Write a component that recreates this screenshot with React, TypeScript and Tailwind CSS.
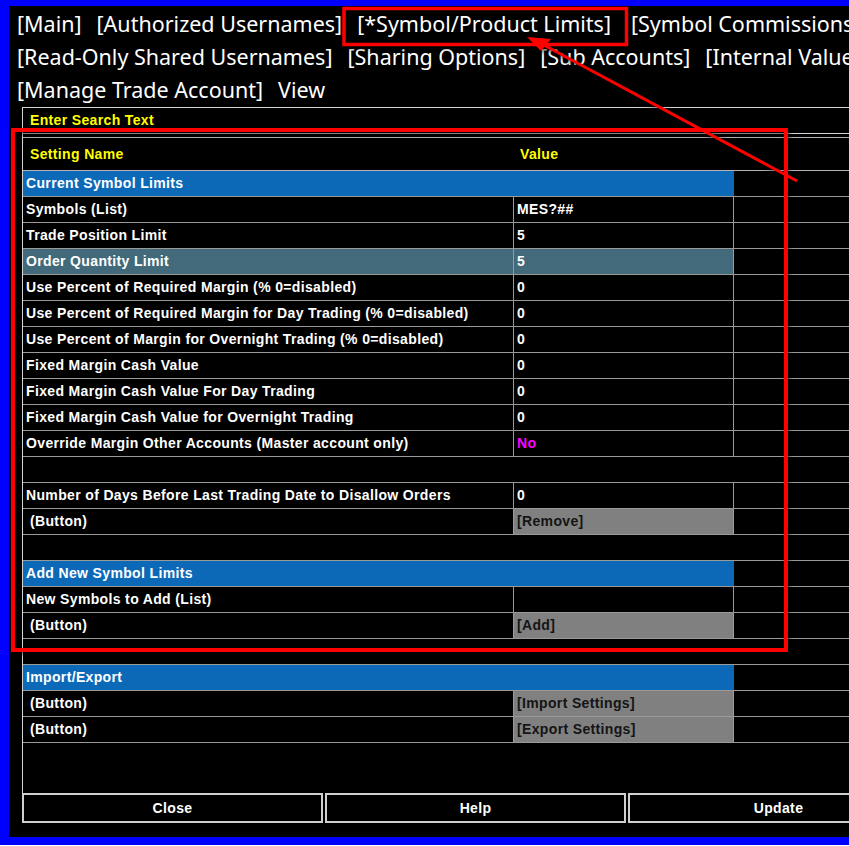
import React from "react";

type Row =
  | { kind: "section"; label: string }
  | { kind: "empty" }
  | { kind: "item"; label: string; value?: string; magenta?: boolean; highlight?: boolean; button?: boolean; indent?: boolean };

const rows: Row[] = [
  { kind: "section", label: "Current Symbol Limits" },
  { kind: "item", label: "Symbols (List)", value: "MES?##" },
  { kind: "item", label: "Trade Position Limit", value: "5" },
  { kind: "item", label: "Order Quantity Limit", value: "5", highlight: true },
  { kind: "item", label: "Use Percent of Required Margin (% 0=disabled)", value: "0" },
  { kind: "item", label: "Use Percent of Required Margin for Day Trading (% 0=disabled)", value: "0" },
  { kind: "item", label: "Use Percent of Margin for Overnight Trading (% 0=disabled)", value: "0" },
  { kind: "item", label: "Fixed Margin Cash Value", value: "0" },
  { kind: "item", label: "Fixed Margin Cash Value For Day Trading", value: "0" },
  { kind: "item", label: "Fixed Margin Cash Value for Overnight Trading", value: "0" },
  { kind: "item", label: "Override Margin Other Accounts (Master account only)", value: "No", magenta: true },
  { kind: "empty" },
  { kind: "item", label: "Number of Days Before Last Trading Date to Disallow Orders", value: "0" },
  { kind: "item", label: "(Button)", value: "[Remove]", button: true, indent: true },
  { kind: "empty" },
  { kind: "section", label: "Add New Symbol Limits" },
  { kind: "item", label: "New Symbols to Add (List)", value: "" },
  { kind: "item", label: "(Button)", value: "[Add]", button: true, indent: true },
  { kind: "empty" },
  { kind: "section", label: "Import/Export" },
  { kind: "item", label: "(Button)", value: "[Import Settings]", button: true, indent: true },
  { kind: "item", label: "(Button)", value: "[Export Settings]", button: true, indent: true },
];

function TableRow({ row }: { row: Row }) {
  if (row.kind === "empty") {
    return <div className="h-[26px] border-b border-[#9a9a9a]" />;
  }
  if (row.kind === "section") {
    return (
      <div className="h-[26px] border-b border-[#9a9a9a] flex">
        <div className="w-[711px] bg-[#0c69b8] pl-[3px] flex items-center text-white">{row.label}</div>
        <div className="flex-1" />
      </div>
    );
  }
  let valueCls = "text-white";
  if (row.button) valueCls = "bg-[#808080] text-[#141414]";
  else if (row.highlight) valueCls = "bg-[#426a7a] text-white";
  else if (row.magenta) valueCls = "text-[#ff00ff]";
  return (
    <div className="h-[26px] border-b border-[#9a9a9a] flex">
      <div
        className={`w-[491px] border-r border-[#9a9a9a] flex items-center text-white whitespace-nowrap overflow-hidden ${
          row.indent ? "pl-[7px]" : "pl-[3px]"
        } ${row.highlight ? "bg-[#426a7a]" : ""}`}
      >
        {row.label}
      </div>
      <div className={`w-[220px] border-r border-[#9a9a9a] flex items-center pl-[3px] whitespace-nowrap ${valueCls}`}>
        {row.value}
      </div>
      <div className="flex-1" />
    </div>
  );
}

export default function App() {
  return (
    <div className="relative w-[849px] h-[846px] overflow-hidden bg-white">
      <div className="w-[960px] h-[845px] bg-black border-l-[9px] border-t-[6px] border-b-[8px] border-r-0 border-[#0000ff] flex flex-col">
        <div
          className="pl-[8px] pt-[1px] text-white text-[21.5px] leading-[33px] whitespace-nowrap"
          style={{ fontFamily: '"Noto Sans", "Open Sans", sans-serif' }}
        >
          <div className="flex gap-[15px]">
            <span>[Main]</span>
            <span>[Authorized Usernames]</span>
            <span>[*Symbol/Product Limits]</span>
            <span className="ml-[5px]">[Symbol Commissions]</span>
          </div>
          <div className="flex gap-[15px]">
            <span>[Read-Only Shared Usernames]</span>
            <span>[Sharing Options]</span>
            <span>[Sub Accounts]</span>
            <span>[Internal Values]</span>
          </div>
          <div className="flex gap-[15px]">
            <span>[Manage Trade Account]</span>
            <span>View</span>
          </div>
        </div>

        <div
          className="ml-[13px] mt-[1px] flex flex-col text-[14px] font-bold tracking-[0.35px]"
          style={{ fontFamily: '"Liberation Sans", Arial, sans-serif' }}
        >
          <div className="border-l border-[#d4d4d4] flex flex-col">
            <div className="h-[27px] border-t border-b border-[#d4d4d4] flex items-center pl-[7px] text-[#ffff00]">
              Enter Search Text
            </div>
            <div className="h-[3px]" />
            <div className="h-[34px] border-t border-b border-[#b4b4b4] flex items-center text-[#ffff00]">
              <div className="w-[491px] pl-[7px]">Setting Name</div>
              <div className="w-[220px] pl-[6px]">Value</div>
            </div>
            {rows.map((r, i) => (
              <TableRow key={i} row={r} />
            ))}
            <div className="h-[50px]" />
          </div>
          <div className="flex gap-[2px] text-white">
            <div className="w-[301px] h-[30px] border-2 border-[#cfcfcf] flex items-center justify-center">Close</div>
            <div className="w-[301px] h-[30px] border-2 border-[#cfcfcf] flex items-center justify-center">Help</div>
            <div className="w-[301px] h-[30px] border-2 border-[#cfcfcf] flex items-center justify-center">Update</div>
          </div>
        </div>
      </div>

      <svg
        className="absolute inset-0 pointer-events-none"
        width="849"
        height="846"
        viewBox="0 0 849 846"
        style={{ filter: "drop-shadow(1px 2px 2px rgba(0,0,0,0.7))" }}
      >
        <rect x="344" y="8.5" width="282.5" height="36" fill="none" stroke="#ff0000" strokeWidth="3.5" />
        <rect x="13" y="130" width="773" height="520" fill="none" stroke="#ff0000" strokeWidth="4" />
        <line x1="797" y1="181" x2="540" y2="43" stroke="#ff0000" strokeWidth="3" />
        <polygon points="527,37 551,39 541,51" fill="#ff0000" />
      </svg>
    </div>
  );
}
